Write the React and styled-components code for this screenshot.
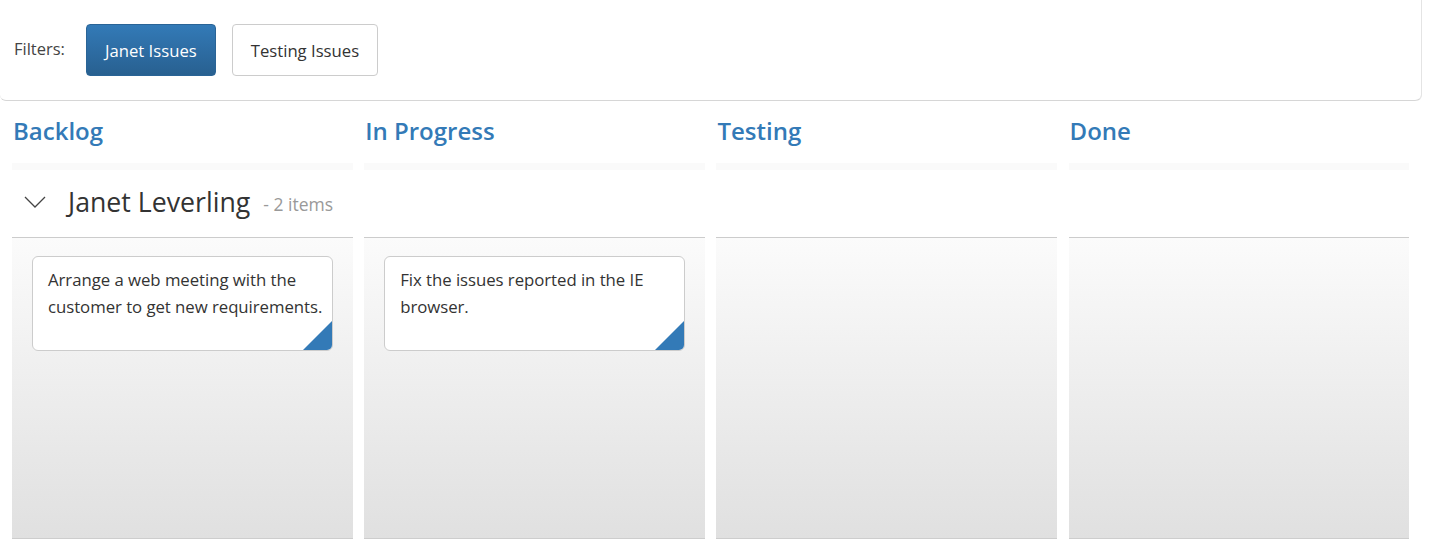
import styled, { createGlobalStyle } from "styled-components";

const GlobalStyle = createGlobalStyle`
  body {
    margin: 0;
    background: #fff;
    font-family: "Open Sans", "Noto Sans", sans-serif;
    color: #333;
  }
`;

const Page = styled.div`
  width: 1431px;
  height: 552px;
  overflow: hidden;
`;

const Toolbar = styled.div`
  display: flex;
  align-items: center;
  gap: 16px;
  width: 1421px;
  height: 101px;
  box-sizing: border-box;
  padding: 0 14px;
  border-bottom: 1px solid #d6d6d6;
  border-radius: 0 0 6px 6px;
  box-shadow: 1px 0 0 #e4e4e4;
`;

const FilterLabel = styled.span`
  font-size: 16.5px;
  color: #444;
  margin-right: 5px;
  margin-top: -4px;
`;

const FilterButton = styled.button`
  height: 52px;
  padding: 0 18px;
  font-family: inherit;
  font-size: 16.7px;
  border-radius: 4px;
  cursor: pointer;
  border: 1px solid ${(p) => (p.$active ? "#2a6496" : "#ccc")};
  color: ${(p) => (p.$active ? "#fff" : "#333")};
  background: ${(p) =>
    p.$active ? "linear-gradient(#337ab7, #286090)" : "#fff"};
`;

const Board = styled.div`
  display: grid;
  grid-template-columns: repeat(4, 340.5px);
  column-gap: 11.7px;
  padding-left: 12px;
`;

const ColumnTitle = styled.div`
  height: 69px;
  padding: 13px 0 0 1px;
  box-sizing: border-box;
  font-size: 24px;
  font-weight: 600;
  color: #337ab7;
  border-bottom: 7px solid #fafafa;
`;

const SwimRow = styled.div`
  grid-column: 1 / -1;
  display: grid;
  grid-template-columns: subgrid;
`;

const LaneHeader = styled.div`
  height: 68px;
  box-sizing: border-box;
  border-bottom: 1px solid #ccc;
  display: flex;
  align-items: center;
  padding-left: 12px;
`;

const Chevron = styled.svg`
  width: 22px;
  height: 12px;
  margin-right: 22px;
  margin-top: -4px;
`;

const LaneName = styled.span`
  font-size: 26.7px;
  color: #333;
  margin-right: 13px;
  margin-top: -4px;
`;

const LaneCount = styled.span`
  font-size: 17.5px;
  color: #999;
`;

const Cell = styled.div`
  height: 301px;
  box-sizing: border-box;
  padding: 18px 20px;
  background: linear-gradient(#fbfbfb, #e0e0e0);
  border-bottom: 1px solid #cdcdcd;
`;

const Card = styled.div`
  position: relative;
  overflow: hidden;
  background: #fff;
  border: 1px solid #ccc;
  border-radius: 6px;
  height: 95px;
  box-sizing: border-box;
  padding: 9px 0 9px 15px;
  font-size: 16.8px;
  letter-spacing: -0.05px;
  line-height: 27px;
  color: #333;
`;

const Corner = styled.span`
  position: absolute;
  right: 0;
  bottom: 0;
  width: 0;
  height: 0;
  border-style: solid;
  border-width: 0 0 29px 29px;
  border-color: transparent transparent #337ab7 transparent;
`;

const columns = ["Backlog", "In Progress", "Testing", "Done"];

const cards = {
  Backlog: "Arrange a web meeting with the customer to get new requirements.",
  "In Progress": "Fix the issues reported in the IE browser.",
};

export default function App() {
  return (
    <Page>
      <GlobalStyle />
      <Toolbar>
        <FilterLabel>Filters:</FilterLabel>
        <FilterButton $active>Janet Issues</FilterButton>
        <FilterButton>Testing Issues</FilterButton>
      </Toolbar>
      <Board>
        {columns.map((c) => (
          <ColumnTitle key={c}>{c}</ColumnTitle>
        ))}
        <SwimRow>
          <LaneHeader>
            <Chevron viewBox="0 0 22 12">
              <path d="M1 1 L11 11 L21 1" fill="none" stroke="#444" strokeWidth="1.3" />
            </Chevron>
            <LaneName>Janet Leverling</LaneName>
            <LaneCount>- 2 items</LaneCount>
          </LaneHeader>
          <LaneHeader />
          <LaneHeader />
          <LaneHeader />
          {columns.map((c) => (
            <Cell key={c}>
              {cards[c] && (
                <Card>
                  {cards[c]}
                  <Corner />
                </Card>
              )}
            </Cell>
          ))}
        </SwimRow>
      </Board>
    </Page>
  );
}
